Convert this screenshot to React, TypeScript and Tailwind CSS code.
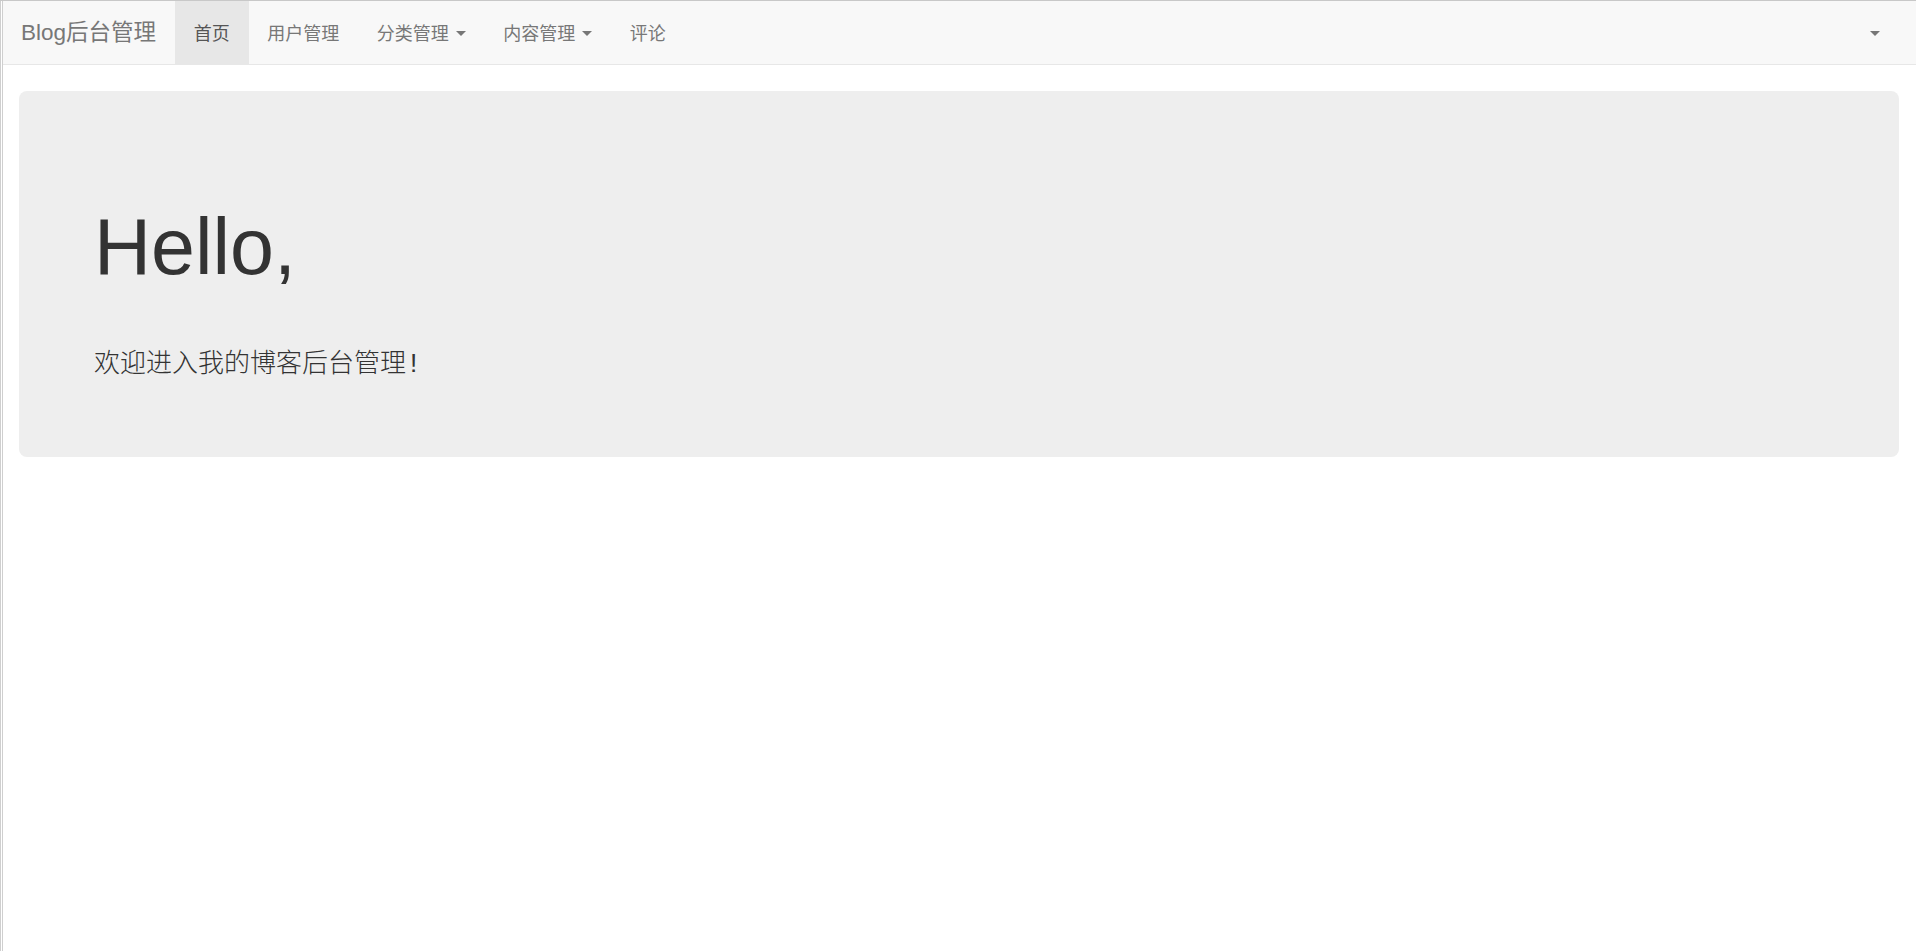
import React from "react";

const FONT = { fontFamily: '"Liberation Sans", "Noto Sans CJK SC", Arial, sans-serif' };

function Caret() {
  return (
    <span className="inline-block w-0 h-0 border-t-[5px] border-t-[#777] border-x-[5px] border-x-transparent ml-[7px] align-middle" />
  );
}

export default function App() {
  const items: { label: string; active?: boolean; caret?: boolean }[] = [
    { label: "首页", active: true },
    { label: "用户管理" },
    { label: "分类管理", caret: true },
    { label: "内容管理", caret: true },
    { label: "评论" },
  ];
  return (
    <div className="min-h-[951px] w-full bg-white border-t border-[#c8c8c8] flex" style={FONT}>
      <div className="w-px bg-[#cfcfcf]" />
      <div className="w-px bg-white" />
      <div className="w-px bg-[#cfcfcf]" />
      <div className="flex-1 flex flex-col min-w-0">
        <nav className="h-[64px] bg-[#f8f8f8] border-b border-[#e7e7e7] flex items-stretch">
          <a className="flex items-center pl-[18px] pr-[19px] pt-[2px] text-[22.5px] text-[#777] leading-none">
            Blog后台管理
          </a>
          <ul className="flex items-stretch">
            {items.map((it) => (
              <li
                key={it.label}
                className={
                  "flex items-center px-[18.75px] pt-[2px] text-[18px] leading-none " +
                  (it.active ? "bg-[#e7e7e7] text-[#555]" : "text-[#777]")
                }
              >
                <span>{it.label}</span>
                {it.caret && <Caret />}
              </li>
            ))}
          </ul>
          <div className="flex-1" />
          <div className="flex items-center pr-[36px] pt-[2px]">
            <span className="inline-block w-0 h-0 border-t-[5px] border-t-[#777] border-x-[5px] border-x-transparent" />
          </div>
        </nav>
        <div className="ml-[16px] mr-[17px] mt-[26px] bg-[#eeeeee] rounded-[8px] pl-[75px] pt-[111px] pb-[76px]">
          <h1 className="text-[79px] leading-[89px] text-[#333] font-normal m-0">Hello,</h1>
          <p className="mt-[54px] text-[26px] leading-[36px] text-[#333] font-light">
            欢迎进入我的博客后台管理<span className="ml-[4px]">!</span>
          </p>
        </div>
      </div>
    </div>
  );
}
